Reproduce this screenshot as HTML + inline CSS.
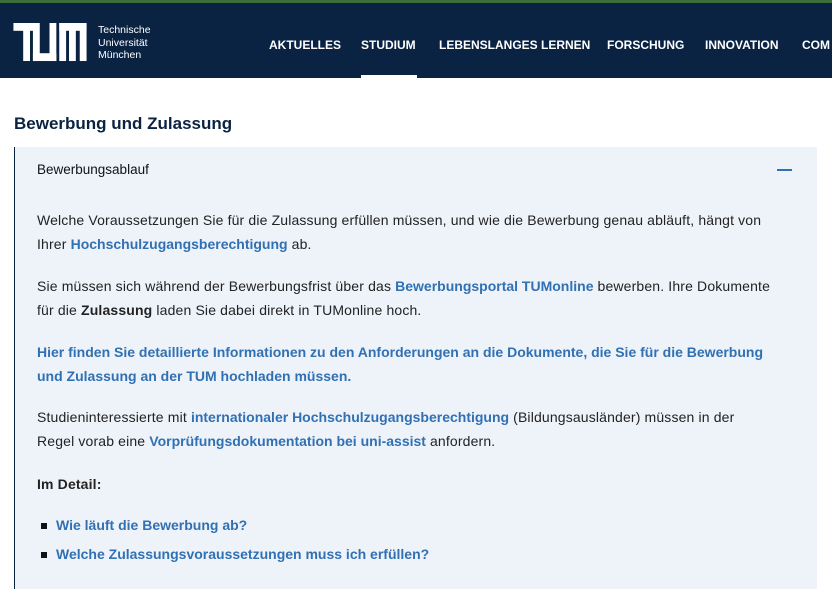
<!DOCTYPE html>
<html><head><meta charset="utf-8"><style>
*{margin:0;padding:0;box-sizing:border-box}
body{width:832px;height:596px;overflow:hidden;background:#fff;font-family:"Liberation Sans",sans-serif;color:#1a1a1a}
.hdr{position:absolute;left:0;top:0;width:832px;height:78px;background:#0a2342;border-top:3px solid #3c6e3a}
.nav a{position:absolute;top:35px;color:#fff;font-weight:bold;font-size:12px;text-decoration:none;white-space:nowrap}
.under{position:absolute;left:361px;top:72px;width:56px;height:3px;background:#fff}
.lt{position:absolute;left:98px;top:21px;color:#fff;font-size:10.5px;line-height:12.5px}
h1{position:absolute;left:14px;top:114px;font-size:17px;color:#0a2342;font-weight:bold}
.panel{position:absolute;left:14px;top:147px;width:803px;height:442px;background:#eef3fa;border-left:1.5px solid #0a2342}
.panel .t{position:absolute;left:22px;top:15px;font-size:13.5px;color:#111}
.minus{position:absolute;left:762px;top:22px;width:15px;height:2px;background:#3070b3}
p{position:absolute;left:22px;font-size:14px;line-height:24px;color:#222;width:790px;white-space:nowrap;letter-spacing:0.15px}
a.l{color:#3070b3;text-decoration:none;font-weight:bold;letter-spacing:0}
.li{position:absolute;left:26px;font-size:14px}
.li:before{content:"";position:absolute;left:0;top:6px;width:6px;height:6px;background:#111}
.li a{margin-left:15px}
</style></head><body>
<div class="hdr">
<svg style="position:absolute;left:13px;top:20px" width="74" height="39" viewBox="0 0 75 40">
<g fill="#fff">
<rect x="0" y="0" width="26" height="8"/><rect x="10" y="0" width="7" height="39"/>
<rect x="20" y="0" width="7" height="39"/><rect x="20" y="31" width="24" height="8"/><rect x="37" y="0" width="7" height="39"/>
<rect x="47" y="0" width="28" height="8"/><rect x="47" y="0" width="7" height="39"/><rect x="57" y="0" width="7" height="39"/><rect x="68" y="0" width="7" height="39"/>
</g></svg>
<div class="lt">Technische<br>Universität<br>München</div>
<div class="nav">
<a style="left:269px">AKTUELLES</a><a style="left:361px">STUDIUM</a><a style="left:439px">LEBENSLANGES LERNEN</a><a style="left:607px">FORSCHUNG</a><a style="left:705px">INNOVATION</a><a style="left:802px">COM</a>
</div>
<div class="under"></div>
</div>
<h1>Bewerbung und Zulassung</h1>
<div class="panel">
<div class="t">Bewerbungsablauf</div>
<div class="minus"></div>
<p style="top:61px">Welche Voraussetzungen Sie für die Zulassung erfüllen müssen, und wie die Bewerbung genau abläuft, hängt von<br>Ihrer <a class="l">Hochschulzugangsberechtigung</a> ab.</p>
<p style="top:127px">Sie müssen sich während der Bewerbungsfrist über das <a class="l">Bewerbungsportal TUMonline</a> bewerben. Ihre Dokumente<br>für die <b>Zulassung</b> laden Sie dabei direkt in TUMonline hoch.</p>
<p style="top:193px"><a class="l">Hier finden Sie detaillierte Informationen zu den Anforderungen an die Dokumente, die Sie für die Bewerbung<br>und Zulassung an der TUM hochladen müssen.</a></p>
<p style="top:258px">Studieninteressierte mit <a class="l">internationaler Hochschulzugangsberechtigung</a> (Bildungsausländer) müssen in der<br>Regel vorab eine <a class="l">Vorprüfungsdokumentation bei uni-assist</a> anfordern.</p>
<p style="top:325px"><b>Im Detail:</b></p>
<div class="li" style="top:370px"><a class="l">Wie läuft die Bewerbung ab?</a></div>
<div class="li" style="top:399px"><a class="l">Welche Zulassungsvoraussetzungen muss ich erfüllen?</a></div>
</div>
</body></html>
